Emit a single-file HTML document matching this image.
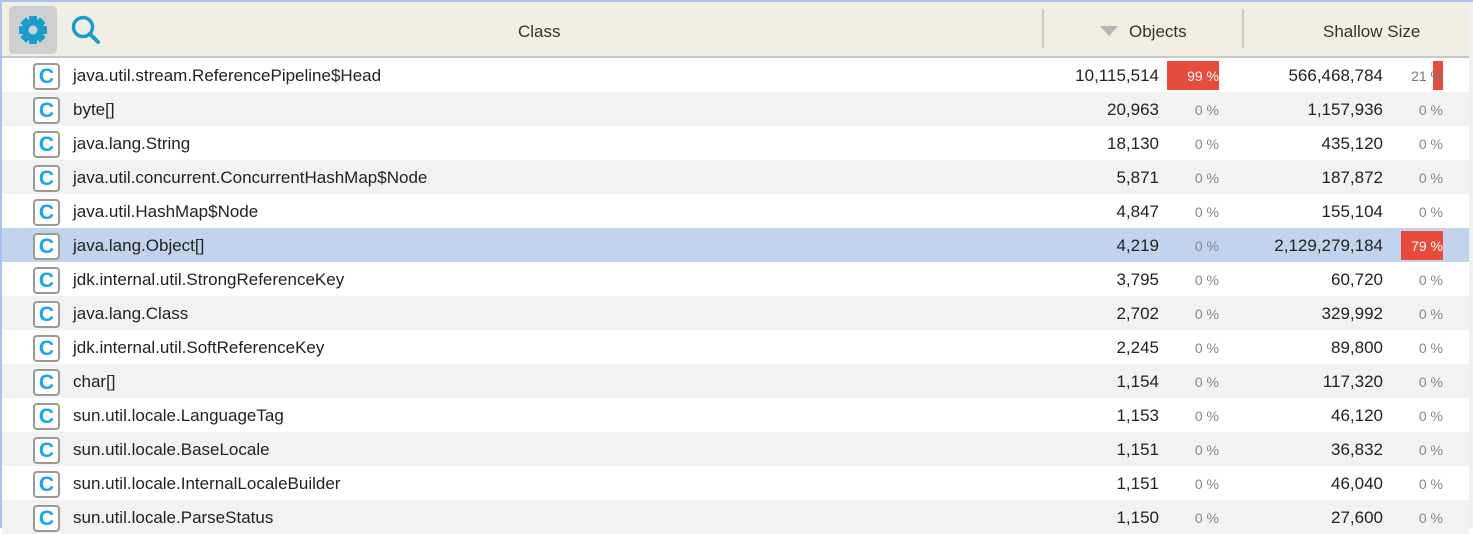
<!DOCTYPE html>
<html><head><meta charset="utf-8"><style>
body{margin:0;width:1473px;height:528px;overflow:hidden;background:#fff;font-family:"Liberation Sans",sans-serif;position:relative}
.frame{position:absolute;left:0;top:0;width:1473px;height:528px;box-sizing:border-box;border-top:2px solid #a9c2f2;border-left:2px solid #a9c2f2;z-index:5;pointer-events:none}
.hdr{position:absolute;left:0;top:0;width:1469px;height:56px;background:#f1eee4;border-bottom:2px solid #c8c8c8}
.gear{position:absolute;left:9px;top:6px;width:48px;height:48px;background:#cfcfcf;border-radius:5px}
.ht{position:absolute;top:22px;font-size:17px;color:#333}
.sep{position:absolute;top:9px;width:2px;height:39px;background:#c9c9c9}
.row{position:absolute;left:2px;width:1467px;height:34px;font-size:17px;color:#222}
.ic{position:absolute;left:31px;top:5px;width:23px;height:23px;border:2px solid #9a9a9a;border-radius:4px;background:#fff;color:#14a6ec;font-weight:bold;font-size:21px;line-height:23px;text-align:center}
.nm{position:absolute;left:71px;top:8px}
.n{position:absolute;top:8px;text-align:right}
.p{position:absolute;top:10px;font-size:14px;color:#888;text-align:right}
.bar{position:absolute;top:3px;height:29px;background:#e64b3c}
.rs{position:absolute;right:0;top:0;width:4px;height:528px;background:#f0f0f0}
</style></head><body>
<div class="frame"></div>
<div class="hdr">
<div class="gear"><svg width="48" height="48" viewBox="0 0 48 48"><g fill="#1a9ccf" transform="translate(24 24)"><circle r="11"/><g><rect x="-4" y="-14" width="8" height="28" rx="1"/><rect x="-4" y="-14" width="8" height="28" rx="1" transform="rotate(45)"/><rect x="-4" y="-14" width="8" height="28" rx="1" transform="rotate(90)"/><rect x="-4" y="-14" width="8" height="28" rx="1" transform="rotate(135)"/></g><circle r="4.5" fill="#cfcfcf"/></g></svg></div>
<svg style="position:absolute;left:70px;top:14px" width="32" height="32" viewBox="0 0 32 32"><circle cx="13" cy="13" r="9.5" fill="none" stroke="#1a9ccf" stroke-width="3.5"/><line x1="20" y1="20" x2="28" y2="28" stroke="#1a9ccf" stroke-width="4" stroke-linecap="round"/></svg>
<div class="ht" style="left:518px">Class</div>
<div class="sep" style="left:1042px"></div>
<div class="sep" style="left:1242px"></div>
<svg style="position:absolute;left:1100px;top:26px" width="18" height="10"><polygon points="0,0 18,0 9,10" fill="#b5b5b5"/></svg>
<div class="ht" style="left:1129px">Objects</div>
<div class="ht" style="left:1323px">Shallow Size</div>
</div>
<div id="rows"></div>
<div class="rs"></div>
<script>
var d=[["java.util.stream.ReferencePipeline$Head","10,115,514","99 %","566,468,784","21 %"],["byte[]","20,963","0 %","1,157,936","0 %"],["java.lang.String","18,130","0 %","435,120","0 %"],["java.util.concurrent.ConcurrentHashMap$Node","5,871","0 %","187,872","0 %"],["java.util.HashMap$Node","4,847","0 %","155,104","0 %"],["java.lang.Object[]","4,219","0 %","2,129,279,184","79 %"],["jdk.internal.util.StrongReferenceKey","3,795","0 %","60,720","0 %"],["java.lang.Class","2,702","0 %","329,992","0 %"],["jdk.internal.util.SoftReferenceKey","2,245","0 %","89,800","0 %"],["char[]","1,154","0 %","117,320","0 %"],["sun.util.locale.LanguageTag","1,153","0 %","46,120","0 %"],["sun.util.locale.BaseLocale","1,151","0 %","36,832","0 %"],["sun.util.locale.InternalLocaleBuilder","1,151","0 %","46,040","0 %"],["sun.util.locale.ParseStatus","1,150","0 %","27,600","0 %"]];
var h="";d.forEach(function(r,i){var bg=i==5?"#c2d3ee":(i%2?"#f2f2f2":"#fff");
var b1=i==0?'<div class="bar" style="left:1165px;width:52px"></div>':'';
var b2=i==0?'<div class="bar" style="left:1431px;width:10px"></div>':(i==5?'<div class="bar" style="left:1399px;width:42px"></div>':'');
var pc1=i==0?'#fff':'#888',pc2=i==5?'#fff':(i==0?'#777':'#888');
h+='<div class="row" style="top:'+(58+34*i)+'px;background:'+bg+'"><div class="ic">C</div><div class="nm">'+r[0]+'</div>'+b1+b2+
'<div class="n" style="right:310px">'+r[1]+'</div><div class="p" style="right:250px;color:'+pc1+'">'+r[2]+'</div><div class="n" style="right:86px">'+r[3]+'</div><div class="p" style="right:26px;color:'+pc2+'">'+r[4]+'</div></div>';});
document.getElementById("rows").innerHTML=h;
</script>
</body></html>
